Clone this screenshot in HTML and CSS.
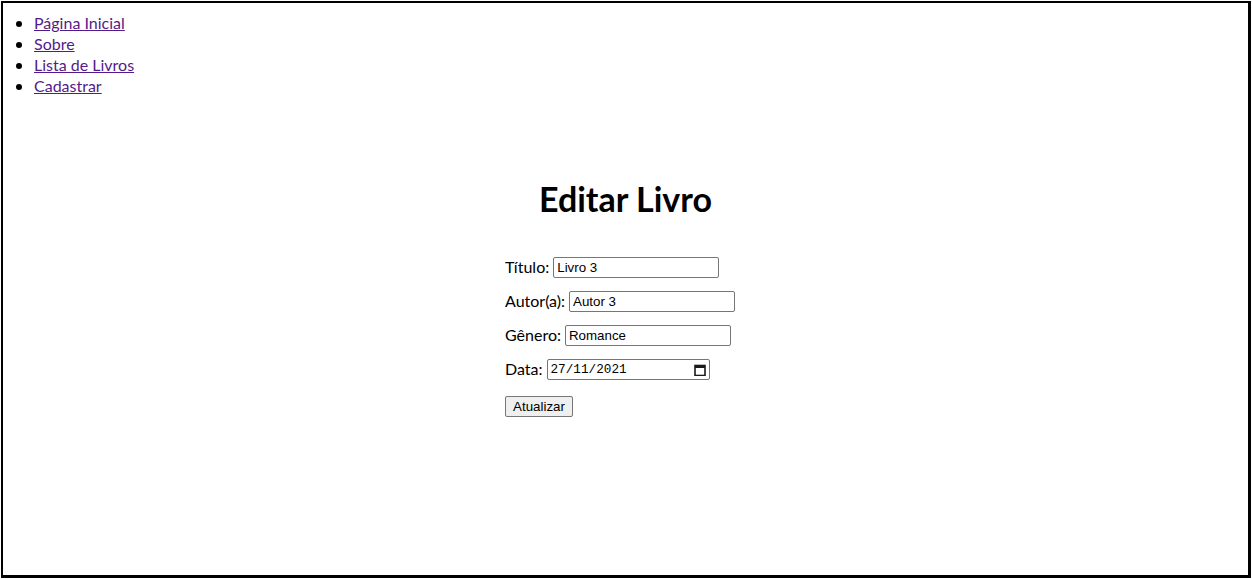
FILE: index.html
```html
<!DOCTYPE html>
<html lang="pt-BR">
<head>
<meta charset="utf-8">
<title>Editar Livro</title>
<link rel="stylesheet" href="styles.css">
</head>
<body>
<div class="page">
  <nav class="nav">
    <ul class="nav-list">
      <li><a href="#">Página Inicial</a></li>
      <li><a href="#">Sobre</a></li>
      <li><a href="#">Lista de Livros</a></li>
      <li><a href="#">Cadastrar</a></li>
    </ul>
  </nav>
  <main class="main">
    <h1 class="title">Editar Livro</h1>
    <form class="form">
      <div class="row"><label>Título:</label><input class="field w-titulo" type="text" value="Livro 3"></div>
      <div class="row"><label>Autor(a):</label><input class="field w-autor" type="text" value="Autor 3"></div>
      <div class="row"><label>Gênero:</label><input class="field w-genero" type="text" value="Romance"></div>
      <div class="row"><label>Data:</label>
        <div class="date-field">
          <input class="date-input" type="text" value="27/11/2021">
          <svg class="cal" width="12" height="12" viewBox="0 0 12 12" aria-hidden="true">
            <rect x="1" y="1.5" width="10" height="10" fill="none" stroke="#1a1a1a" stroke-width="1.6"/>
            <rect x="1" y="1" width="10" height="3" fill="#1a1a1a"/>
          </svg>
        </div>
      </div>
      <div class="row btn-row"><button class="btn" type="button">Atualizar</button></div>
    </form>
  </main>
</div>
</body>
</html>
```
FILE: styles.css
```css
html, body {
  margin: 0;
  padding: 0;
  background: #fff;
}
body {
  font-family: "Lato", "Noto Sans", sans-serif;
  font-size: 16px;
  color: #000;
}
.page {
  box-sizing: border-box;
  width: 1250px;
  height: 577px;
  margin: 1px 0 0 1px;
  border: 2px solid #000;
  border-width: 2px 3px 3px 2px;
}
.nav-list {
  margin: 9px 0 0 0;
  padding-left: 31px;
  line-height: 21px;
}
.nav-list li::marker {
  font-family: "DejaVu Sans", sans-serif;
  font-size: 18px;
}
.nav-list a {
  color: #551a8b;
}
.main {
  display: flex;
  flex-direction: column;
  align-items: center;
}
.title {
  margin: 83px 0 0 0;
  font-size: 34px;
  line-height: 40px;
  font-weight: 700;
  text-align: center;
}
.form {
  box-sizing: border-box;
  width: 241px;
  margin-top: 38px;
  display: flex;
  flex-direction: column;
  gap: 13px;
}
.row {
  display: flex;
  align-items: center;
  height: 21px;
  gap: 4px;
}
.row label {
  position: relative;
  top: -1px;
}
.field {
  box-sizing: border-box;
  height: 21px;
  border: 1px solid #767676;
  border-radius: 2px;
  padding: 1px 3px;
  font-family: "Liberation Sans", Arial, sans-serif;
  font-size: 13.33px;
  color: #000;
}
.w-titulo { width: 166px; }
.w-autor { width: 166px; }
.w-genero { width: 166px; }
.date-field {
  box-sizing: border-box;
  width: 163px;
  height: 21px;
  border: 1px solid #767676;
  border-radius: 2px;
  display: flex;
  align-items: center;
  padding: 0 3px 0 3px;
}
.date-input {
  flex: 1;
  min-width: 0;
  border: none;
  padding: 0;
  outline: none;
  font-family: "Liberation Mono", "DejaVu Sans Mono", monospace;
  font-size: 12.7px;
  color: #000;
}
.cal {
  flex: none;
}
.btn-row {
  margin-top: 3px;
}
.btn {
  box-sizing: border-box;
  width: 68px;
  height: 21px;
  padding: 0;
  background: #efefef;
  border: 1px solid #767676;
  border-radius: 2px;
  font-family: "Liberation Sans", Arial, sans-serif;
  font-size: 13.33px;
  color: #000;
}
```
